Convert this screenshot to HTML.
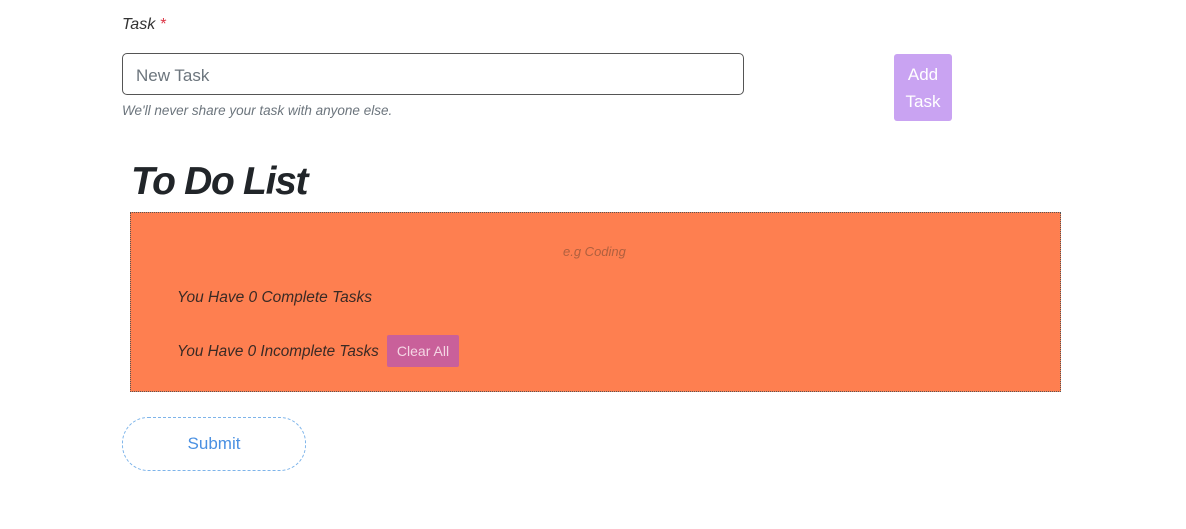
<!DOCTYPE html>
<html><head><style>
body{margin:0;width:1186px;height:529px;background:#fff;font-family:"Liberation Sans",sans-serif;position:relative;overflow:hidden}
.a{position:absolute}
</style></head><body>
<div class="a" style="left:122px;top:16px;font-size:16px;font-style:italic;color:#333">Task <span style="color:#dc3545">*</span></div>
<div class="a" style="left:122px;top:53px;width:620px;height:40px;border:1.5px solid #555;border-radius:5px"></div>
<div class="a" style="left:136px;top:66px;font-size:17px;color:#6c757d">New Task</div>
<div class="a" style="left:122px;top:103px;font-size:13.5px;font-style:italic;color:#6c757d">We'll never share your task with anyone else.</div>
<div class="a" style="left:894px;top:54px;width:58px;height:67px;background:#c9a3f2;border-radius:3px;color:#fff;font-size:17px;text-align:center;line-height:27px;padding-top:7px;box-sizing:border-box">Add<br>Task</div>
<div class="a" style="left:131px;top:160px;font-size:39px;font-weight:bold;font-style:italic;color:#212529;letter-spacing:-1.3px">To Do List</div>
<div class="a" style="left:130px;top:212px;width:929px;height:178px;background:#fe7f50;border:1px dotted #555"></div>
<div class="a" style="left:563px;top:244px;font-size:13px;font-style:italic;color:#b0603f">e.g Coding</div>
<div class="a" style="left:177px;top:289px;font-size:15.5px;font-style:italic;color:#3a2a25">You Have 0 Complete Tasks</div>
<div class="a" style="left:177px;top:343px;font-size:15.3px;font-style:italic;color:#3a2a25">You Have 0 Incomplete Tasks</div>
<div class="a" style="left:387px;top:335px;width:72px;height:32px;background:#c9609a;border-radius:2px;color:#f4d6e4;font-size:14px;text-align:center;line-height:32px">Clear All</div>
<div class="a" style="left:122px;top:417px;width:182px;height:52px;border:1px dashed #7db4ea;border-radius:26px;color:#4a90e2;font-size:17px;text-align:center;line-height:52px">Submit</div>
</body></html>
